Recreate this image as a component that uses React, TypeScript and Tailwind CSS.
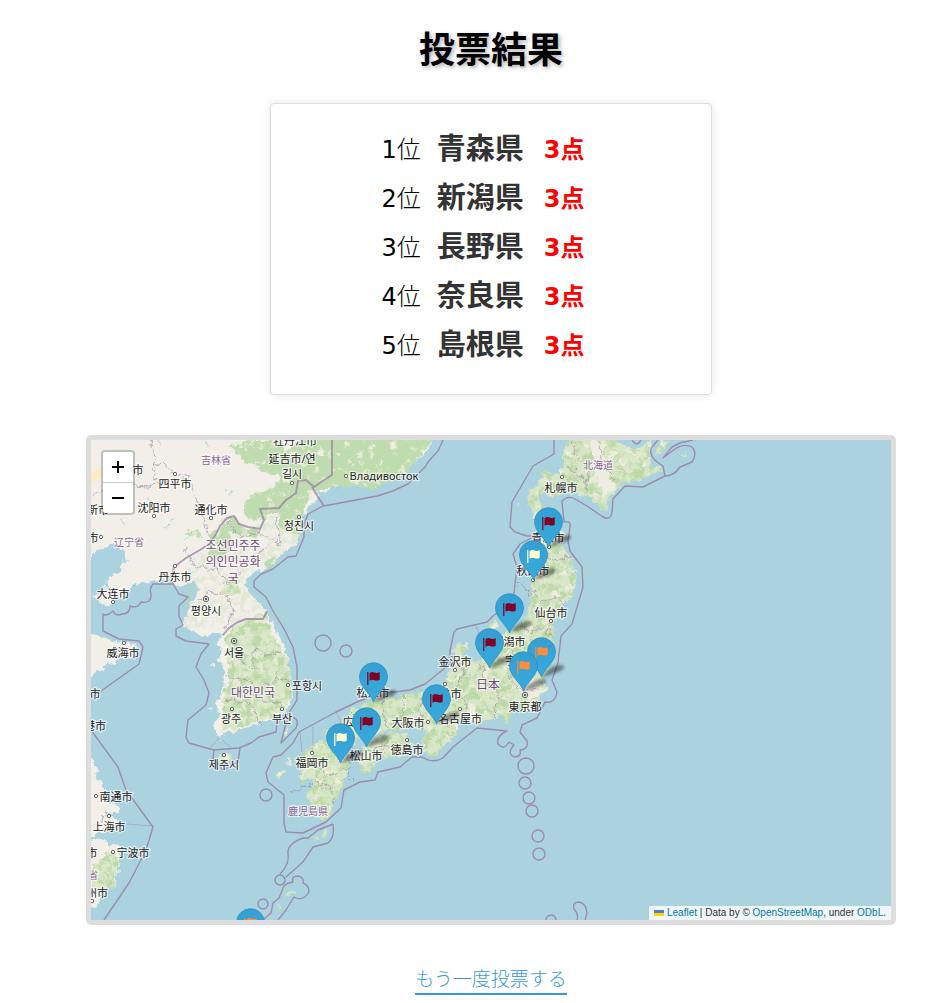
import React from "react";

const ranking = [
  { rank: 1, name: "青森県", points: 3 },
  { rank: 2, name: "新潟県", points: 3 },
  { rank: 3, name: "長野県", points: 3 },
  { rank: 4, name: "奈良県", points: 3 },
  { rank: 5, name: "島根県", points: 3 },
];

const DARK = "#800026";
const ORANGE = "#fd8d3c";
const CREAM = "#ffffcc";

// Marker tips in map units, ordered from north to south so southern pins overlap.
const pins: [number, number, string][] = [
  [548, 547, DARK],
  [533, 580, CREAM],
  [509, 633, DARK],
  [489, 668, DARK],
  [541, 677, ORANGE],
  [523, 691, ORANGE],
  [373, 702, DARK],
  [436, 724, DARK],
  [366, 747, DARK],
  [340, 763, CREAM],
  [250, 948, ORANGE],
];

const land = [
  // Manchuria, Primorye and Korea
  "80,430 438,430 433,440 428,451 418,459 408,466 405,474 393,479 383,484 373,489 368,484 360,481 357,486 347,481 345,472 340,478 333,487 323,492 316,489 319,497 313,502 304,516 303,524 298,534 297,544 286,551 278,557 268,567 256,572 248,577 245,586 251,594 263,607 269,616 276,631 284,644 289,661 290,681 291,687 292,700 286,710 279,717 269,720 259,723 249,728 239,730 229,733 219,737 214,727 219,713 216,703 223,693 224,680 223,667 218,661 223,651 214,644 223,637 216,634 203,636 193,631 181,626 186,617 189,607 196,597 198,587 194,581 183,586 174,584 169,576 156,581 139,584 126,591 116,601 103,607 102,601 93,597 103,589 109,584 106,581 119,571 126,561 124,551 114,544 103,546 91,557 80,560",
  // Shandong
  "80,634 91,634 103,637 119,642 134,644 136,648 133,657 119,661 106,666 91,676 80,680",
  // Jiangsu
  "80,740 91,757 96,767 98,777 106,790 109,800 119,808 121,813 113,813 106,812 113,817 118,823 111,830 101,833 91,838 80,840",
  // Zhejiang
  "80,842 91,842 99,838 106,843 119,847 121,857 118,867 116,877 113,887 103,893 96,907 91,908 80,915",
  // Hokkaido
  "567,430 567,440 563,454 563,467 557,474 547,472 539,469 542,477 538,486 530,489 527,497 530,506 535,512 532,522 537,529 545,517 553,517 548,511 540,504 538,497 543,493 553,497 562,494 573,492 587,497 597,504 606,511 607,502 615,491 625,481 637,481 648,476 662,469 652,466 648,456 652,440 640,449 627,446 613,440 611,430",
  "668,440 665,447 655,456 658,447 663,440",
  // Honshu
  "542,537 551,533 562,531 565,537 563,547 570,557 575,571 577,584 573,594 568,601 562,604 558,616 552,624 553,641 553,657 548,671 542,677 548,690 540,695 535,705 528,712 520,712 517,706 513,703 512,712 505,723 502,715 493,720 480,723 470,723 462,720 458,715 455,720 460,730 453,737 443,747 435,757 423,753 420,743 427,733 422,727 412,727 400,730 387,730 377,735 368,737 357,740 350,747 340,743 330,743 326,737 324,730 337,728 345,718 352,710 365,703 373,700 383,697 397,697 410,693 423,693 430,697 437,690 445,683 448,673 455,660 453,653 457,645 468,643 469,647 462,652 465,658 473,662 480,660 497,647 503,634 517,627 527,616 530,601 532,584 532,574 530,564 537,547",
  "495,619 497,627 492,631 490,626",
  // Shikoku
  "363,747 373,740 388,733 407,735 412,743 412,748 400,760 390,755 377,760 370,773 362,773 360,763 352,760 362,752",
  // Kyushu
  "313,743 326,740 336,743 348,758 348,770 343,783 336,800 334,810 324,820 319,818 321,807 316,805 313,817 309,807 308,793 316,780 306,777 304,787 299,770 296,760 306,750",
  // Smaller islands
  "214,758 223,755 233,755 231,760 219,763",
  "288,723 289,730 286,740 284,734",
  "325,827 327,832 323,841 322,836",
  "312,838 316,837 318,841 314,843",
  "285,895 293,889 296,890 288,898",
  "278,904 281,906 279,911",
  "271,915 274,916 272,920 269,919",
  "275,775 284,769 286,771 278,779",
  "683,453 688,451 686,456 681,457",
  "518,503 520,503 519,507 517,507",
];

const greens = [
  "250,440 282,440 285,452 300,440 298,430 438,430 433,440 405,474 373,489 357,486 333,487 319,489 304,507 300,535 280,528 279,511 260,520 246,519 244,504 255,492 270,490 282,478 262,470 240,458 231,445",
  "222,519 234,515 243,528 260,530 258,538 240,535 224,529",
  "209,535 228,522 233,548 221,560 207,555",
  "187,531 200,531 203,537 192,538",
  "263,562 273,557 277,562 268,568",
  "223,590 230,578 237,577 239,594 222,594",
  "226,635 240,622 266,612 270,630 289,661 291,700 280,714 240,728 222,730 222,700 229,680 226,655",
  "91,870 110,850 119,860 112,888 92,895",
];

const borders = [
  "M443 440L438 451L428 462L425 467L408 484L393 491L377 496L340 503L323 506L308 514L304 524L304 537L296 556L288 557L273 569L261 574L254 581L254 587L266 597L273 611L283 627L293 647L297 667L297 700L289 713L277 723L276 732L259 737L251 743L239 748L214 750L189 743L186 737L188 720L206 705L209 693L204 680L196 667L201 654L209 644L186 641L176 636L176 629L183 625L179 616L179 606L188 597L179 594L173 584L153 584Q149 588 151 594Q152 604 141 602Q138 609 130 606Q130 614 122 614Q116 617 113 611Q106 617 103 614L103 631L119 639L139 641L143 647L139 664L111 684L91 698",
  "M91 730L118 767L126 790L153 827L146 850L129 883L104 920",
  "M214 750L213 758L223 770L238 762L240 748",
  "M291 717Q300 718 296 728L281 743L286 723Z",
  "M450 664L450 651L454 632L457 629L487 622L493 616L513 601L517 567L513 554L520 544L535 536L527 536L515 532L510 527L512 502L533 466L554 454L554 440",
  "M450 664L425 684L410 690L378 694L357 702L336 712L299 732L293 743L281 755L273 757L266 773L268 782L284 795L284 823L286 832L303 833L326 822L341 808L344 790L360 782L375 780L378 772L400 767L412 757L422 757Q433 764 443 758L453 747L477 728L507 731Q496 736 498 744Q504 751 509 742L514 745Q506 754 515 757Q522 756 520 750Q529 749 527 741L520 732L522 725L537 718L545 702Q555 704 557 692L552 680L558 663L561 636L572 624L583 587L582 567L570 551L568 541L570 527Q572 521 564 522L562 501Q568 495 575 499L587 506L603 517Q611 521 612 512L613 499L625 486L643 487L665 476L663 466L657 462Q648 454 652 447L658 440",
  "M665 476Q674 476 680 467L692 462Q698 453 692 447Q685 443 675 449L663 458L672 447L680 443L693 440",
  "M632 440Q637 448 641 440",
  "M333 824Q335 838 328 843L313 847L303 862L286 877M333 824L318 830L308 838L303 838Q287 844 288 853Q290 864 280 874",
  "M278 920L286 910L294 897Q303 902 309 892Q309 885 303 883Q304 877 298 876Q291 876 293 882Q283 883 282 891L279 898L273 903L271 913L263 920",
  "M577 920Q579 914 574 909Q572 902 579 902Q586 903 587 913L585 920",
];

const mainBorders = [
  "M174 567L186 558L200 550L209 544L216 534L220 526L227 518L234 516L239 524L248 527L260 529L264 520L260 509L279 508L286 500L296 493L298 481L306 480L314 487L321 482L332 475L332 440",
  "M312 487L318 497L324 506M173 584L172 576L174 567",
  "M223 635L229 628L236 623L246 619L263 619L267 611",
];

const thinBorders = [
  "M150 440L155 458L152 468L163 464L174 474L187 475L193 490L208 534",
  "M91 495L110 488L130 486L150 487L158 482L152 468",
  "M228 522L240 537L258 532L280 545L276 520L280 510",
  "M184 546L195 566L217 570L229 584L238 577L239 563L258 558L269 541",
  "M196 602L209 592L228 597L233 610L226 628",
  "M234 640L238 660L254 668L254 649L268 655L283 652M226 676L246 680L260 689L279 678L289 681",
  "M225 699L250 703L262 724M262 700L282 705",
  "M91 826L102 823L106 812",
  "M514 582L526 589L530 596L533 591L543 602L556 598L566 605M537 556L553 560L573 557M520 622L529 634L545 626L553 640M500 642L512 650L517 668L509 680L517 689L541 690",
  "M458 658L464 675L457 688L466 704L463 718M480 662L485 680L498 690L495 718M445 685L434 700L438 718L451 728M424 695L420 713L425 728M404 695L402 728M383 698L386 729M352 712L363 725L362 738",
  "M365 752L388 746L409 744M380 759L387 741M351 748L348 776L354 782",
  "M312 745L316 765L331 775L345 768M316 781L332 788L336 804M291 792L312 785",
  "M571 440L577 458L589 468L586 484M600 440L601 460L614 480M566 466L578 472L589 492",
];

const seaLines = [
  "M126 824L153 826",
  "M209 749L219 738L231 747",
  "M313 727L313 745M300 732L302 752M336 712L347 735M475 624L482 641",
];

const circles = [
  [323, 643, 8], [346, 651, 6], [266, 795, 6], [280, 880, 5], [263, 904, 5],
  [526, 766, 8], [525, 783, 6], [529, 798, 6], [532, 811, 6], [538, 836, 6],
  [539, 854, 6], [551, 920, 5],
];

const towns = [
  [175, 474], [154, 516], [211, 518], [101, 537], [175, 566], [292, 483],
  [299, 517], [113, 602], [124, 643], [346, 476], [288, 685], [232, 709],
  [282, 709], [224, 755], [312, 753], [96, 796], [109, 816], [113, 852],
  [92, 901], [562, 477], [551, 621], [455, 670], [445, 684], [460, 709],
  [428, 722], [407, 740], [549, 547], [533, 580],
];

const capitals = [[206, 599], [234, 641], [525, 695]];

const cities: [number, number, string][] = [
  [138, 474, "市"], [175, 488, "四平市"], [154, 512, "沈阳市"], [211, 514, "通化市"],
  [98, 514, "新市"], [93, 542, "市"], [113, 598, "大连市"], [175, 581, "丹东市"],
  [295, 445, "牡丹江市"], [292, 463, "延吉市/연"], [292, 478, "길시"],
  [299, 530, "청진시"], [206, 615, "평양시"], [234, 657, "서울"], [123, 657, "威海市"],
  [307, 690, "포항시"], [231, 723, "광주"], [282, 723, "부산"], [224, 769, "제주시"],
  [312, 767, "福岡市"], [116, 801, "南通市"], [109, 831, "上海市"], [133, 857, "宁波市"],
  [95, 698, "市"], [95, 730, "港市"], [92, 857, "市"], [97, 897, "州市"],
  [384, 480, "Владивосток"], [561, 492, "札幌市"], [548, 542, "青森市"],
  [533, 575, "秋田市"], [551, 617, "仙台市"], [509, 646, "新潟市"], [455, 666, "金沢市"],
  [527, 665, "宇都宮市"], [525, 711, "東京都"], [373, 697, "松江市"], [359, 726, "広島市"],
  [408, 727, "大阪市"], [460, 723, "名古屋市"], [407, 754, "徳島市"], [366, 760, "松山市"],
  [445, 698, "福井市"],
];

const provinces: [number, number, string][] = [
  [216, 464, "吉林省"], [129, 546, "辽宁省"], [598, 469, "北海道"], [308, 815, "鹿児島県"],
  [93, 879, "省"],
];

const countries: [number, number, string][] = [
  [233, 550, "조선민주주"], [233, 566, "의인민공화"], [233, 583, "국"],
  [253, 697, "대한민국"], [488, 689, "日本"],
];

function Pin({ x, y, color }: { x: number; y: number; color: string }) {
  return (
    <g transform={`translate(${x + 0.5} ${y})`}>
      <path d="M0 0L5 -6Q13 -13 21 -12Q25 -10 19 -6Q10 -2 0 0Z" fill="#000" opacity=".4" filter="url(#shadow)" />
      <path
        d="M0 0C-2.500 -8 -14 -15 -14 -25.300A14 14 0 0 1 14 -25.300C14 -15 2.500 -8 0 0Z"
        fill="url(#pin)"
        stroke="#2f8fbf"
        strokeWidth=".8"
      />
      <rect x="-6.500" y="-30" width="1.500" height="13" fill={color} opacity=".8" />
      <path d="M-4 -28.700Q-1.500 -30.600 .8 -29.500Q3.500 -28.300 6.200 -30V-22.300Q3.500 -20.700 .8 -22Q-1.500 -23 -4 -21.200Z" fill={color} />
    </g>
  );
}

function MapDrawing() {
  return (
    <svg
      viewBox="91 440 800 480"
      preserveAspectRatio="xMidYMid slice"
      className="block h-full w-full bg-[#aad3df]"
      role="img"
      aria-label="投票結果の地図"
    >
      <defs>
        <linearGradient id="pin" x1="0" y1="0" x2="0" y2="1">
          <stop offset="0" stopColor="#349fd2" />
          <stop offset="1" stopColor="#38aadd" />
        </linearGradient>
        <filter id="shadow" x="-30%" y="-30%" width="160%" height="160%">
          <feGaussianBlur stdDeviation="1.500" />
        </filter>
        <filter id="coast" filterUnits="userSpaceOnUse" x="81" y="430" width="820" height="500" colorInterpolationFilters="sRGB">
          <feTurbulence type="fractalNoise" baseFrequency=".16" numOctaves="3" seed="4" />
          <feDisplacementMap in="SourceGraphic" scale="9" xChannelSelector="R" yChannelSelector="G" />
        </filter>
        <filter id="forest" x="0" y="0" width="100%" height="100%" colorInterpolationFilters="sRGB">
          <feTurbulence type="fractalNoise" baseFrequency=".13" numOctaves="4" seed="9" />
          <feColorMatrix values="0 0 0 0 .73  0 0 0 0 .85  0 0 0 0 .65  5 0 0 0 -2.200" />
        </filter>
        <filter id="plains" x="0" y="0" width="100%" height="100%" colorInterpolationFilters="sRGB">
          <feTurbulence type="fractalNoise" baseFrequency=".12" numOctaves="4" seed="21" />
          <feColorMatrix values="0 0 0 0 .94  0 0 0 0 .93  0 0 0 0 .88  0 6 0 0 -3.500" />
        </filter>
        <clipPath id="japan">
          {land.slice(4).map((p) => <polygon key={p} points={p} />)}
        </clipPath>
        <clipPath id="woods">
          {greens.slice(5).map((p) => <polygon key={p} points={p} />)}
        </clipPath>
        <clipPath id="north">
          {greens.slice(0, 5).map((p) => <polygon key={p} points={p} />)}
        </clipPath>
        <clipPath id="peninsula">
          <polygon points="186,560 210,540 260,525 305,495 304,540 256,572 245,586 263,607 240,620 185,630" />
        </clipPath>
      </defs>

      <g filter="url(#coast)">
        <rect x="76" y="425" width="830" height="510" fill="#aad3df" />
        {land.map((p, i) => (
          <polygon key={p} points={p} fill={i < 4 ? "#f2efe9" : "#d9e6c7"} />
        ))}
        {greens.map((p, i) => (
          <polygon key={p} points={p} fill={i < 5 ? "#bfdcae" : "#dae7c9"} />
        ))}
        <g clipPath="url(#japan)">
          <rect x="91" y="440" width="800" height="480" filter="url(#forest)" />
          <rect x="91" y="440" width="800" height="480" filter="url(#plains)" />
          <path d="M518 690L525 672L538 681L546 692L530 700ZM589 440L602 444L604 466L613 485L604 500L596 475ZM463 713L474 706L480 719L468 724Z" fill="#efede3" />
        </g>
        <g clipPath="url(#woods)">
          <rect x="91" y="440" width="800" height="480" filter="url(#forest)" />
          <rect x="91" y="440" width="800" height="480" filter="url(#plains)" opacity=".6" />
        </g>
        <g clipPath="url(#north)">
          <rect x="91" y="440" width="800" height="480" filter="url(#plains)" />
        </g>
        <g clipPath="url(#peninsula)" opacity=".3">
          <rect x="91" y="440" width="800" height="480" filter="url(#forest)" />
        </g>
        <path d="M91 475L102 466L104 478L91 484Z" fill="#fbecc8" />
        <path d="M166 528l6 -5M158 440l4 8M204 440l5 6M182 477l7 6M192 588l4 3M470 673l2 4M211 510l4 7M226 490l5 4M146 498l5 4M170 521l4 -3M122 520l2 5M183 541l6 -4" stroke="#aad3df" strokeWidth="1.500" />
        <path d="M204 625l-3 4 5 1zM214 662l-4 2 4 4zM208 708l3 4 3 -3zM218 738l5 1 -3 3zM288 757l4 3 -5 4zM301 770l3 1 -1 5z" fill="#e9ebdc" />
        <g fill="none" stroke="#9a7fa5" strokeWidth="1" opacity=".6" strokeLinejoin="round">
          {thinBorders.map((d) => <path key={d} d={d} />)}
        </g>
      </g>

      <g fill="none" stroke="#9a7fa5" strokeLinejoin="round">
        <g strokeWidth="1" opacity=".45">{seaLines.map((d) => <path key={d} d={d} />)}</g>
        <g strokeWidth="1.900" opacity=".75">{mainBorders.map((d) => <path key={d} d={d} />)}</g>
        <g strokeWidth="1.400" opacity=".85">
          {borders.map((d) => <path key={d} d={d} />)}
          {circles.map(([x, y, r]) => <circle key={`${x}-${y}`} cx={x} cy={y} r={r} />)}
        </g>
      </g>

      <g fill="#fff" stroke="#555" strokeWidth=".9">
        {towns.map(([x, y]) => <circle key={`${x}-${y}`} cx={x} cy={y} r="1.700" />)}
        {capitals.map(([x, y]) => (
          <g key={`${x}-${y}`}>
            <circle cx={x} cy={y} r="2.700" />
            <circle cx={x} cy={y} r="1" fill="#444" />
          </g>
        ))}
      </g>

      <g
        textAnchor="middle"
        stroke="#fff"
        strokeOpacity=".65"
        strokeWidth="2.500"
        strokeLinejoin="round"
        paintOrder="stroke"
        className="font-['Noto_Sans','Noto_Sans_CJK_JP','Noto_Sans_CJK_SC','Noto_Sans_CJK_KR',sans-serif]"
      >
        <g fill="#222" fontSize="11">
          {cities.map(([x, y, t]) => <text key={`${x}-${y}`} x={x} y={y}>{t}</text>)}
        </g>
        <g fill="#8d6693" fontSize="10">
          {provinces.map(([x, y, t]) => <text key={`${x}-${y}`} x={x} y={y}>{t}</text>)}
        </g>
        <g fill="#714a78" fontSize="12">
          {countries.map(([x, y, t]) => <text key={`${x}-${y}`} x={x} y={y}>{t}</text>)}
        </g>
      </g>

      {pins.map(([x, y, color]) => <Pin key={`${x}-${y}`} x={x} y={y} color={color} />)}
    </svg>
  );
}

export default function App() {
  return (
    <main className="flex flex-col items-center bg-white pt-6 pr-[55px] pb-2 pl-[86px] font-['DejaVu_Sans','Noto_Sans_CJK_JP',sans-serif] text-black">
      <h1 className="text-4xl leading-[54px] font-bold [text-shadow:2px_2px_4px_rgba(0,0,0,0.3)]">投票結果</h1>

      <ol className="mt-[25px] w-full max-w-[442px] rounded border border-[#ddd] bg-white pt-[21px] pb-6 shadow-[0_0_10px_rgba(0,0,0,0.1)]">
        {ranking.map((r) => (
          <li key={r.rank} className="flex h-[49px] items-center justify-center">
            <span className="mr-4 text-2xl font-light"><span className="font-normal">{r.rank}</span>位</span>
            <span className="mr-5 text-[29px] font-bold text-[#333]">{r.name}</span>
            <span className="mr-4 text-2xl font-bold text-[#f00]">{r.points}点</span>
          </li>
        ))}
      </ol>

      <section className="relative mt-10 h-[490px] w-full overflow-hidden rounded-[5px] border-[5px] border-[#ddd]">
        <MapDrawing />
        <div className="absolute top-[10px] left-[10px] flex w-[34px] flex-col overflow-hidden rounded border-2 border-black/20 bg-white bg-clip-padding font-['Liberation_Sans',sans-serif]">
          <button type="button" aria-label="Zoom in" className="flex h-[31px] items-center justify-center border-b border-[#ccc]">
            <svg viewBox="0 0 12 12" className="size-3" stroke="#000" strokeWidth="2"><path d="M0 6H12M6 0V12" /></svg>
          </button>
          <button type="button" aria-label="Zoom out" className="flex h-[30px] items-center justify-center">
            <svg viewBox="0 0 12 12" className="size-3" stroke="#000" strokeWidth="2"><path d="M0 6H12" /></svg>
          </button>
        </div>
        <div className="absolute right-0 bottom-0 flex h-[14px] items-center bg-white/80 px-[5px] font-['Liberation_Sans',sans-serif] text-[10px] leading-[14px] whitespace-pre text-[#333]">
          <a href="https://leafletjs.com" className="flex items-center gap-[3px] text-[#0078a8]">
            <svg viewBox="0 0 10 6" className="h-[6px] w-[10px]"><path fill="#4c7be1" d="M0 0h10v3H0z" /><path fill="#ffd500" d="M0 3h10v3H0z" /></svg>
            Leaflet
          </a>
          <span> | Data by © <a href="https://openstreetmap.org" className="text-[#0078a8]">OpenStreetMap</a>, under <a href="https://www.openstreetmap.org/copyright" className="text-[#0078a8]">ODbL</a>.</span>
        </div>
      </section>

      <a href="#vote" className="mt-10 border-b-2 border-[#3498db] text-[19px] leading-7 font-light text-[#3498db]">もう一度投票する</a>
    </main>
  );
}
